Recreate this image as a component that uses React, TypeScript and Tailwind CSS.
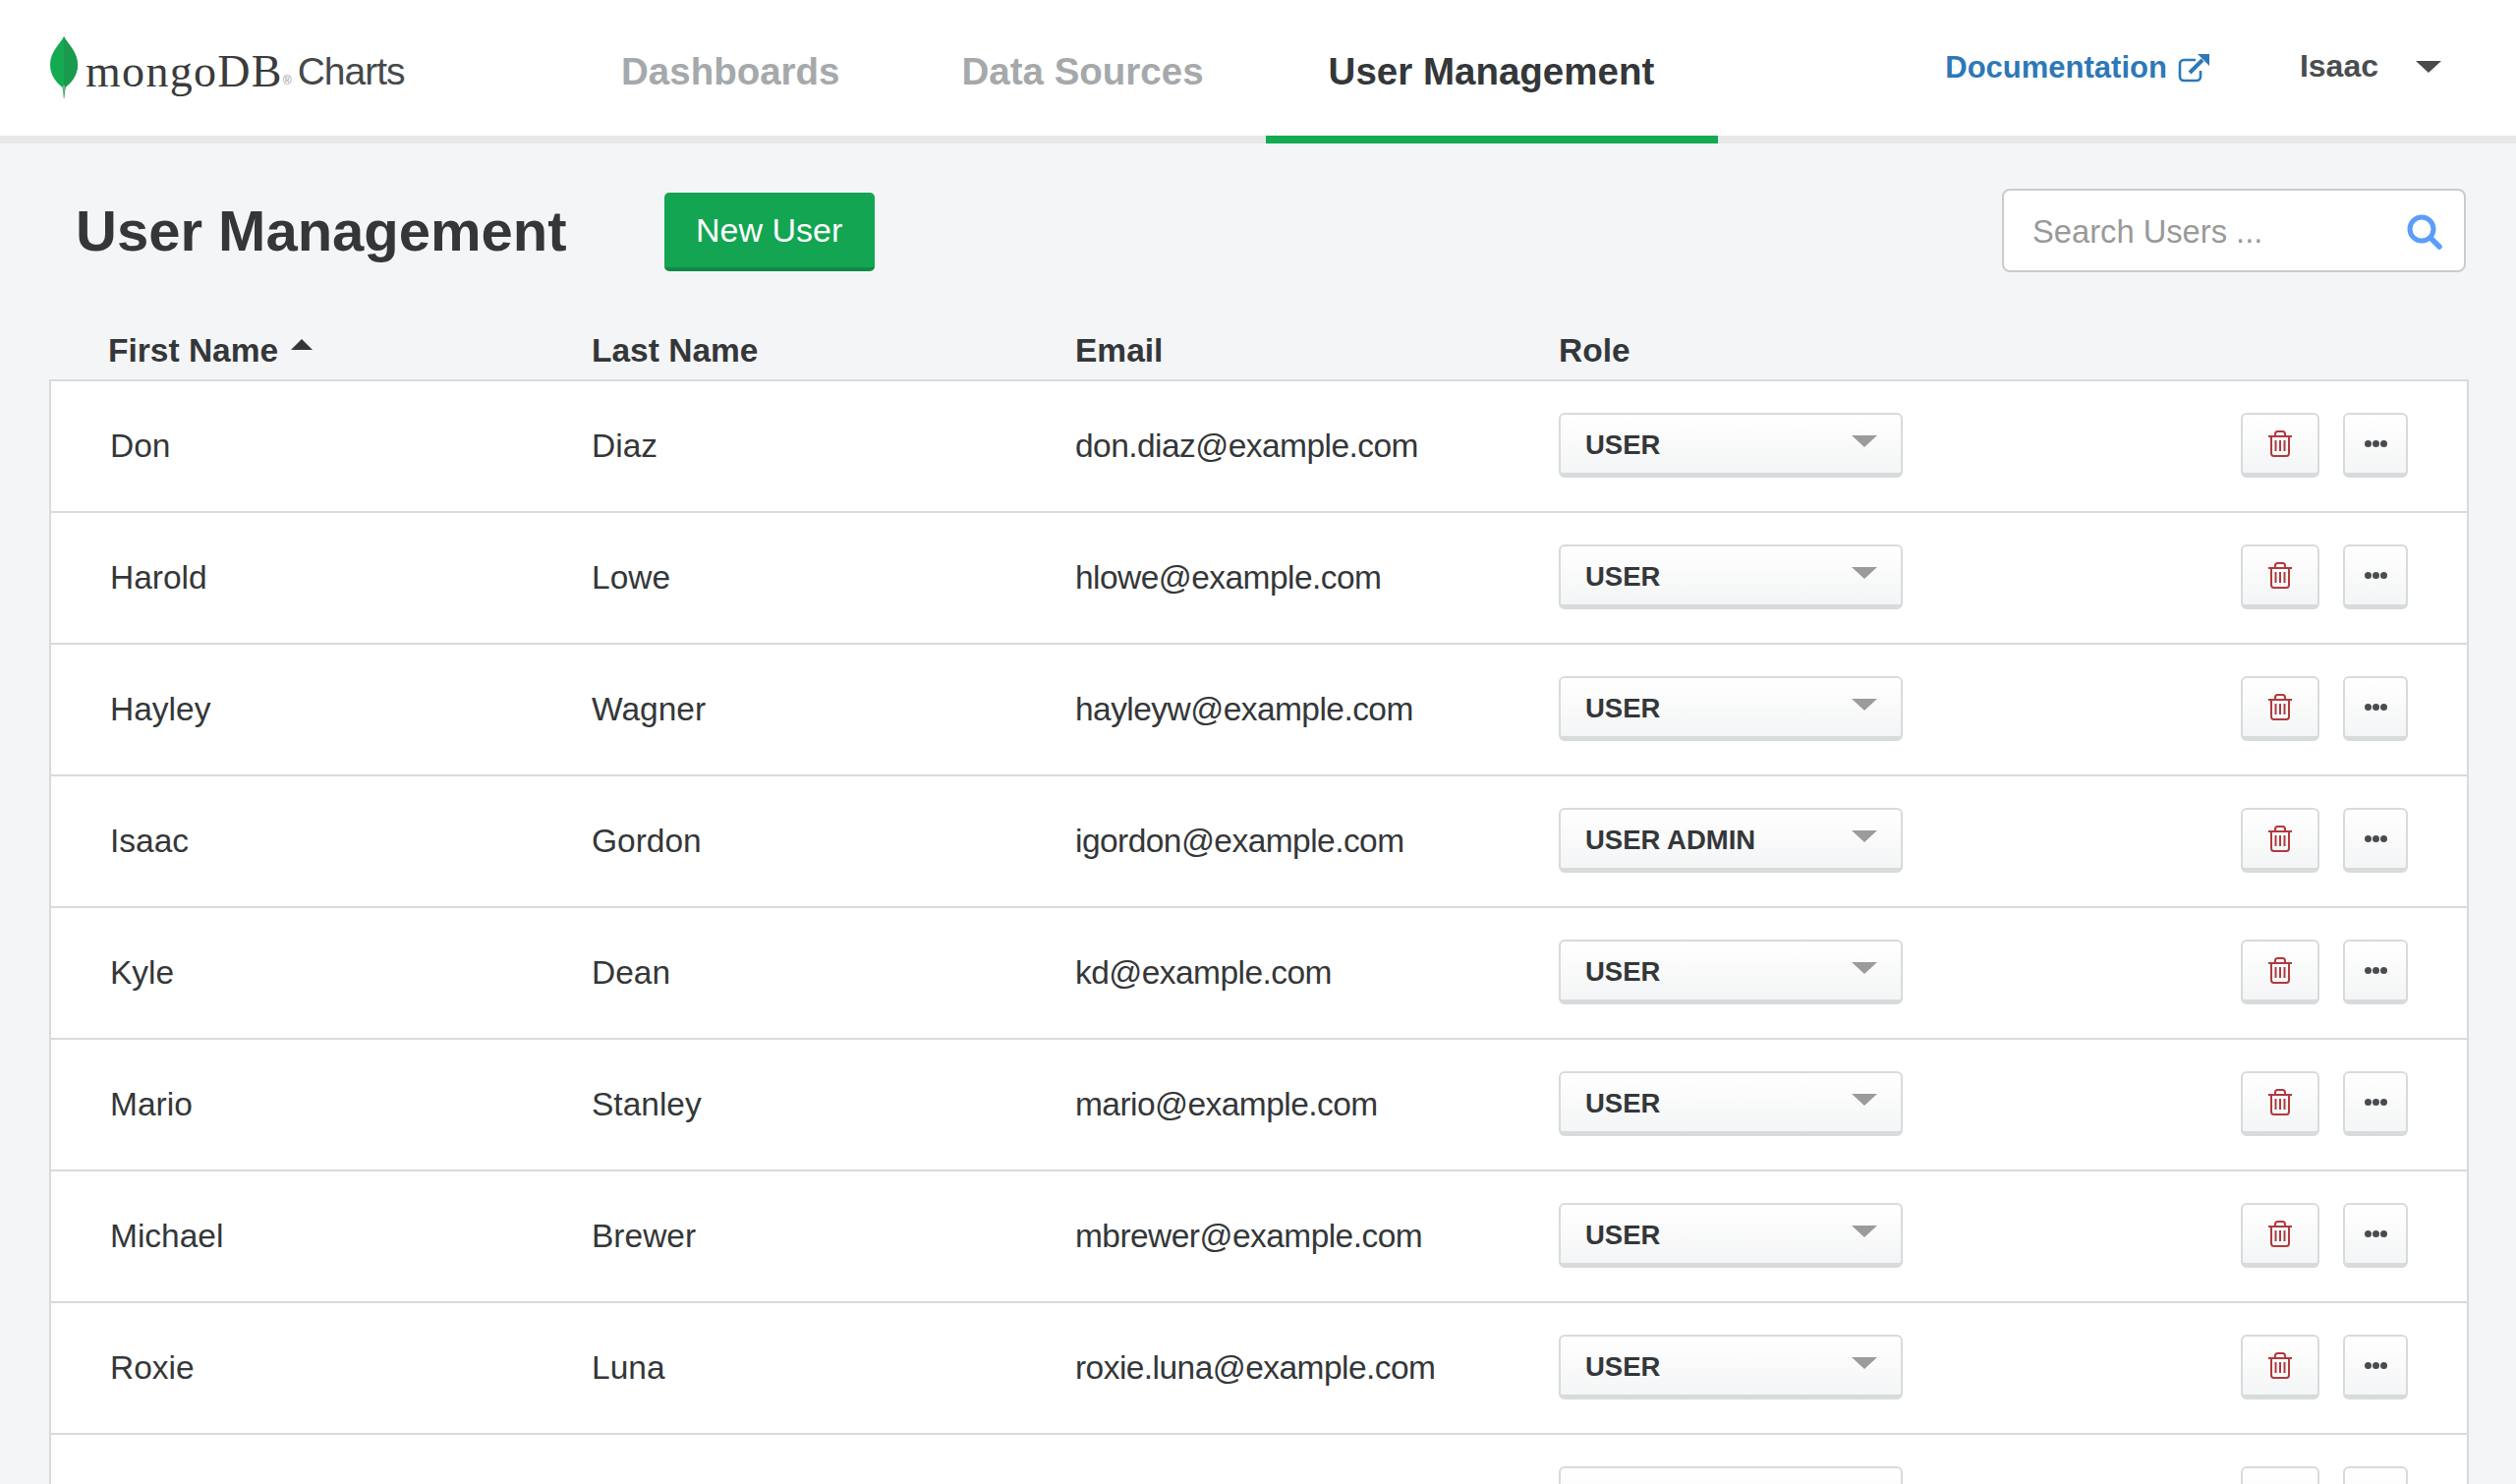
import React from "react"

const USERS = [
  { first: "Don", last: "Diaz", email: "don.diaz@example.com", role: "USER" },
  { first: "Harold", last: "Lowe", email: "hlowe@example.com", role: "USER" },
  { first: "Hayley", last: "Wagner", email: "hayleyw@example.com", role: "USER" },
  { first: "Isaac", last: "Gordon", email: "igordon@example.com", role: "USER ADMIN" },
  { first: "Kyle", last: "Dean", email: "kd@example.com", role: "USER" },
  { first: "Mario", last: "Stanley", email: "mario@example.com", role: "USER" },
  { first: "Michael", last: "Brewer", email: "mbrewer@example.com", role: "USER" },
  { first: "Roxie", last: "Luna", email: "roxie.luna@example.com", role: "USER" },
  { first: "", last: "", email: "", role: "" },
]

function Leaf() {
  return (
    <svg width="30" height="64" viewBox="0 0 30 64" className="shrink-0">
      <path d="M15 0C12 7 1 15 1 29c0 12 8 19 12.500 23L15 64l1.500-12C21 48 29 41 29 29 29 15 18 7 15 0z" fill="#13aa52" />
      <path d="M15 0c3 7 14 15 14 29 0 12-8 19-12.500 23L15 64z" fill="#1a9a4c" />
      <path d="M14.300 50h1.400L15 64z" fill="#b8c4c2" />
    </svg>
  )
}

function ExternalLink() {
  return (
    <svg width="33" height="29" viewBox="0 0 33 29" fill="none" className="shrink-0">
      <path d="M18 6H6a4 4 0 0 0-4 4v13a4 4 0 0 0 4 4h13a4 4 0 0 0 4-4v-6" stroke="#2e78b7" strokeWidth="2.600" />
      <path d="M12 19 25 6" stroke="#2e78b7" strokeWidth="4" />
      <path d="M20 0h12v12z" fill="#2e78b7" />
    </svg>
  )
}

function SearchGlyph() {
  return (
    <svg width="36" height="36" viewBox="0 0 36 36" fill="none" className="shrink-0">
      <circle cx="15" cy="15" r="12" stroke="#5b9dfb" strokeWidth="5" />
      <path d="M24 24l9 9" stroke="#5b9dfb" strokeWidth="5.500" strokeLinecap="round" />
    </svg>
  )
}

function TrashGlyph() {
  return (
    <svg width="24" height="27" viewBox="0 0 24 27" fill="none" className="shrink-0">
      <path d="M0 6h24" stroke="#b03a3e" strokeWidth="2" />
      <path d="M7 6V3.500C7 2 8 1 9.500 1h5C16 1 17 2 17 3.500V6" stroke="#b03a3e" strokeWidth="2" />
      <path d="M3 6v17c0 1.700 1 3 2.500 3h13c1.500 0 2.500-1.300 2.500-3V6" stroke="#b03a3e" strokeWidth="2" />
      <path d="M7.500 10v11M12 10v11M16.500 10v11" stroke="#b03a3e" strokeWidth="2" />
    </svg>
  )
}

function RowButton({ wide, children }: { wide?: boolean; children: React.ReactNode }) {
  return (
    <button className={`flex items-center justify-center h-[66px] ${wide ? "w-[80px]" : "w-[66px]"} rounded-[6px] border-2 border-b-[5px] border-[#d8dbdb] bg-gradient-to-b from-white to-[#f4f5f6]`}>
      {children}
    </button>
  )
}

export default function App() {
  return (
    <div className="h-[1510px] overflow-hidden bg-[#f4f5f7] font-['Liberation_Sans',Arial,sans-serif] text-[#343739]">
      {/* Top nav */}
      <header className="flex items-stretch h-[146px] bg-white border-b-8 border-[#e7e9e9]">
        <div className="flex items-center w-[568px] pl-[50px]">
          <div className="flex items-center">
            <Leaf />
            <span className="ml-[7px] mt-[8px] font-['Liberation_Serif',serif] text-[46px] leading-none text-[#3b3b3b] tracking-[1.3px]">mongoDB</span>
            <span className="text-[12px] text-[#999] mt-[26px]">®</span>
            <span className="ml-[6px] mt-[6px] text-[39px] leading-none tracking-[-1px] text-[#45494b]">Charts</span>
          </div>
        </div>
        <nav className="flex items-stretch text-[38.5px] font-bold">
          <a className="flex items-center pl-[64px] pr-[60px] text-[#a6a9ab] h-[146px]">Dashboards</a>
          <a className="flex items-center pl-[64px] pr-[63px] text-[#a6a9ab] h-[146px]">Data Sources</a>
          <a className="relative flex items-center pl-[64px] pr-[65px] text-[#343739] h-[146px]">
            User Management
            <span className="absolute left-0 right-0 bottom-0 h-[8px] bg-[#13aa52]" />
          </a>
        </nav>
        <div className="ml-auto flex items-start pt-[50px] pr-[76px]">
          <a className="flex items-center gap-[11px] text-[31px] leading-[38px] font-bold text-[#2e78b7]">
            Documentation <ExternalLink />
          </a>
          <span className="ml-[91px] text-[32px] leading-[34px] font-bold text-[#4a4d50]">Isaac</span>
          <span className="block ml-[38px] mt-[12px] w-0 h-0 border-x-[13px] border-x-transparent border-t-[12px] border-t-[#494c4f]" />
        </div>
      </header>

      {/* Page title row */}
      <div className="flex items-center pl-[77px] pr-[51px] pt-[46px] h-[131px]">
        <h1 className="text-[58px] leading-none font-bold text-[#343739]">User Management</h1>
        <button className="ml-[99px] mt-[3px] h-[80px] w-[214px] rounded-[5px] bg-[#13a552] border-b-[4px] border-[#108a44] text-white text-[34px]">New User</button>
        <div className="ml-auto flex items-center justify-between w-[472px] h-[85px] pl-[29px] pr-[22px] rounded-[8px] border-2 border-[#c9cccc] bg-white">
          <span className="pt-[2px] text-[32.7px] text-[#999]">Search Users ...</span>
          <span className="pt-[2px]"><SearchGlyph /></span>
        </div>
      </div>

      {/* Table */}
      <div className="ml-[50px] mr-[48px] mt-[50px]">
        <div className="grid grid-cols-[492px_492px_492px_1fr] h-[59px] pt-[1px] pl-[60px] text-[33.5px] font-bold items-center">
          <div className="flex items-center gap-[13px]">
            First Name
            <span className="block w-0 h-0 mb-[14px] border-x-[11px] border-x-transparent border-b-[11px] border-b-[#343739]" />
          </div>
          <div>Last Name</div>
          <div>Email</div>
          <div>Role</div>
        </div>
        <div className="bg-white border-x-2 border-t-2 border-[#d8dbdb]">
          {USERS.map((user, index) => (
            <div key={index} className="grid grid-cols-[490px_491px_493px_1fr] items-center h-[134px] pl-[60px] border-b-2 border-[#d8dbdb] text-[33.5px] text-[#343739]">
              <div className="pt-[1px]">{user.first}</div>
              <div className="pt-[1px]">{user.last}</div>
              <div className="pt-[1px] pl-[1px] tracking-[-0.55px]">{user.email}</div>
              <div className="flex items-center pr-[60px] pb-[2px]">
                <div className="relative flex items-center w-[350px] h-[66px] pl-[25px] rounded-[6px] border-2 border-b-[5px] border-[#d8dbdb] bg-gradient-to-b from-white to-[#f4f5f6] text-[27.5px] font-bold">
                  <span className="pt-[2px]">{user.role}</span>
                  <span className="absolute right-[24px] top-[21px] block w-0 h-0 border-x-[13px] border-x-transparent border-t-[12px] border-t-[#9b9b9b]" />
                </div>
                <div className="ml-auto flex gap-[24px]">
                  <RowButton wide><TrashGlyph /></RowButton>
                  <RowButton>
                    <span className="flex gap-[1px]">
                      <span className="w-[7px] h-[7px] rounded-full bg-[#494c4f]" />
                      <span className="w-[7px] h-[7px] rounded-full bg-[#494c4f]" />
                      <span className="w-[7px] h-[7px] rounded-full bg-[#494c4f]" />
                    </span>
                  </RowButton>
                </div>
              </div>
            </div>
          ))}
        </div>
      </div>
    </div>
  )
}
